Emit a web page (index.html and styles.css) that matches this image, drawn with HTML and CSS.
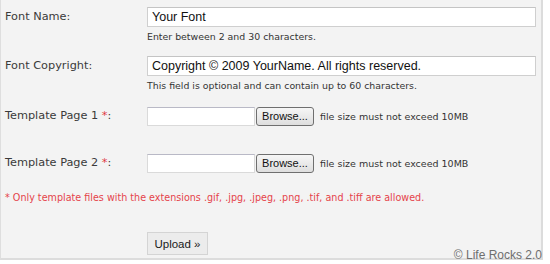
FILE: index.html
```html
<!DOCTYPE html>
<html lang="en">
  <head>
    <meta charset="UTF-8" />
    <title>Font Upload</title>
    <link rel="stylesheet" href="styles.css">
  </head>

  <body>
    <div class="panel">
      <div class="row rowName">
        <label class="label">Font Name:</label>
        <div class="field">
          <input class="textInput" type="text" value="Your Font" />
          <p class="help">Enter between 2 and 30 characters.</p>
        </div>
      </div>

      <div class="row rowCopy">
        <label class="label">Font Copyright:</label>
        <div class="field">
          <input class="textInput" type="text" value="Copyright © 2009 YourName. All rights reserved." />
          <p class="help">This field is optional and can contain up to 60 characters.</p>
        </div>
      </div>

      <div class="row rowFile1">
        <label class="label">Template Page 1 <span class="star">*</span>:</label>
        <div class="field fileField">
          <span class="fileBox"></span>
          <span class="browse">Browse...</span>
          <span class="fileNote">file size must not exceed 10MB</span>
        </div>
      </div>

      <div class="row rowFile2">
        <label class="label">Template Page 2 <span class="star">*</span>:</label>
        <div class="field fileField">
          <span class="fileBox"></span>
          <span class="browse">Browse...</span>
          <span class="fileNote">file size must not exceed 10MB</span>
        </div>
      </div>

      <p class="note">* Only template files with the extensions .gif, .jpg, .jpeg, .png, .tif, and .tiff are allowed.</p>

      <div class="submit">
        <button class="upload">Upload &raquo;</button>
      </div>

      <div class="credit">&copy; Life Rocks 2.0</div>
    </div>
  </body>
</html>
```

FILE: styles.css
```css
* {
  margin: 0px;
  padding: 0px;
  box-sizing: border-box;
}
body {
  background-color: #ffffff;
  font-family: "DejaVu Sans", Verdana, sans-serif;
  color: #3c3c3c;
}

.panel {
  position: relative;
  width: 543px;
  height: 260px;
  background-color: #f3f3f3;
  border-left: 1px solid #dedede;
  border-right: 2px solid #dcdcdc;
  border-bottom: 2px solid #dcdcdc;
  padding-top: 7px;
}

.row {
  display: grid;
  grid-template-columns: 142px 389px;
  padding-left: 4px;
}
.rowCopy {
  margin-top: 13px;
}
.rowFile1 {
  margin-top: 14px;
}
.rowFile2 {
  margin-top: 27px;
}

.label {
  font-size: 11.3px;
  line-height: 20px;
  color: #3a3a3a;
}
.star {
  color: #e0383e;
}

.textInput {
  display: block;
  width: 389px;
  height: 20px;
  border: 1px solid #cfcfcf;
  border-top-color: #c4c4c4;
  background: white;
  padding-left: 4px;
  font-family: "Liberation Sans", Arial, sans-serif;
  font-size: 12.5px;
  color: #111;
  outline: none;
}
.help {
  font-size: 9.4px;
  line-height: 12px;
  margin-top: 4px;
  color: #333;
}

.fileField {
  display: flex;
  align-items: center;
  height: 20px;
}
.fileBox {
  width: 108px;
  height: 19px;
  background: white;
  border: 1px solid #dadada;
  border-top: 1px solid #b9b9c6;
}
.browse {
  width: 58px;
  height: 19px;
  margin-left: 1px;
  border: 1px solid #6f6f6f;
  border-radius: 3px;
  background: linear-gradient(#f6f6f6, #dedede);
  font-family: "Liberation Sans", Arial, sans-serif;
  font-size: 11px;
  line-height: 17px;
  text-align: center;
  color: #111;
}
.fileNote {
  margin-left: 6px;
  font-size: 9.5px;
  color: #333;
}

.note {
  margin-top: 19px;
  padding-left: 4px;
  font-size: 9.6px;
  line-height: 12px;
  color: #e5434a;
}

.submit {
  margin-top: 28px;
  padding-left: 146px;
}
.upload {
  width: 61px;
  height: 23px;
  border: 1px solid #d4d4d4;
  background-color: #ececec;
  font-family: "Liberation Sans", Arial, sans-serif;
  font-size: 11.5px;
  color: #1a1a1a;
}

.credit {
  position: absolute;
  right: -1px;
  bottom: -4px;
  font-family: "Liberation Sans", Arial, sans-serif;
  font-size: 12px;
  color: #6e6e6e;
}
```
